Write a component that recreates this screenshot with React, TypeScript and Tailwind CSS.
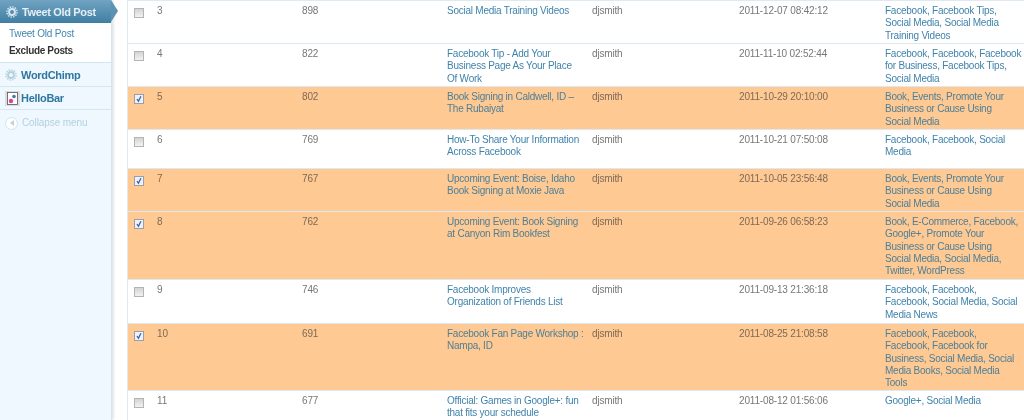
import React from "react";

type Row = { n: number; c: number; t: string[]; d: string; cats: string[]; on?: boolean; h: string };
const rows: Row[] = [
  { n: 3, c: 898, t: ["Social Media Training Videos"], d: "2011-12-07 08:42:12", cats: ["Facebook, Facebook Tips,", "Social Media, Social Media", "Training Videos"], h: "h-[43px]" },
  { n: 4, c: 822, t: ["Facebook Tip - Add Your", "Business Page As Your Place", "Of Work"], d: "2011-11-10 02:52:44", cats: ["Facebook, Facebook, Facebook", "for Business, Facebook Tips,", "Social Media"], h: "h-[43px]" },
  { n: 5, c: 802, t: ["Book Signing in Caldwell, ID –", "The Rubaiyat"], d: "2011-10-29 20:10:00", cats: ["Book, Events, Promote Your", "Business or Cause Using", "Social Media"], on: true, h: "h-[43px]" },
  { n: 6, c: 769, t: ["How-To Share Your Information", "Across Facebook"], d: "2011-10-21 07:50:08", cats: ["Facebook, Facebook, Social", "Media"], h: "h-[39px]" },
  { n: 7, c: 767, t: ["Upcoming Event: Boise, Idaho", "Book Signing at Moxie Java"], d: "2011-10-05 23:56:48", cats: ["Book, Events, Promote Your", "Business or Cause Using", "Social Media"], on: true, h: "h-[43px]" },
  { n: 8, c: 762, t: ["Upcoming Event: Book Signing", "at Canyon Rim Bookfest"], d: "2011-09-26 06:58:23", cats: ["Book, E-Commerce, Facebook,", "Google+, Promote Your", "Business or Cause Using", "Social Media, Social Media,", "Twitter, WordPress"], on: true, h: "h-[68px]" },
  { n: 9, c: 746, t: ["Facebook Improves", "Organization of Friends List"], d: "2011-09-13 21:36:18", cats: ["Facebook, Facebook,", "Facebook, Social Media, Social", "Media News"], h: "h-[44px]" },
  { n: 10, c: 691, t: ["Facebook Fan Page Workshop :", "Nampa, ID"], d: "2011-08-25 21:08:58", cats: ["Facebook, Facebook,", "Facebook, Facebook for", "Business, Social Media, Social", "Media Books, Social Media", "Tools"], on: true, h: "h-[67px]" },
  { n: 11, c: 677, t: ["Official: Games in Google+: fun", "that fits your schedule"], d: "2011-08-12 01:56:06", cats: ["Google+, Social Media"], h: "h-[40px]" },
];

function Box({ on }: { on?: boolean }) {
  return (
    <div className={`mt-[3px] w-[10px] h-[10px] border flex items-center justify-center ${on ? "border-[#9aa0aa] bg-[#eef2f8]" : "border-[#b4b4b4] bg-gradient-to-b from-[#d4d4d4] to-[#f2f2f2]"}`}>
      {on && (
        <svg viewBox="0 0 10 10" className="w-[8px] h-[8px] shrink-0">
          <path d="M2.5 5 L4.3 7.8 L7.4 1.5" fill="none" stroke="#3a5fa8" strokeWidth="1.6" />
        </svg>
      )}
    </div>
  );
}

function Gear({ color, hole }: { color: string; hole: string }) {
  return (
    <svg viewBox="0 0 16 16" className="w-[12px] h-[12px] shrink-0">
      <circle cx="8" cy="8" r="5.2" fill={color} />
      <circle cx="8" cy="8" r="6.8" fill="none" stroke={color} strokeWidth="1.8" strokeDasharray="2 1.5" />
      <circle cx="8" cy="8" r="2.6" fill={hole} />
    </svg>
  );
}

function Lines({ l, cls }: { l: string[]; cls?: string }) {
  return (
    <div className={cls}>
      {l.map((x) => (
        <div key={x} className="whitespace-nowrap">{x}</div>
      ))}
    </div>
  );
}

export default function App() {
  return (
    <div className="w-[1024px] h-[420px] overflow-hidden flex bg-white text-[10px] tracking-[-0.17px] leading-[12.33px] blur-[0.3px] font-['Liberation_Sans',Arial,sans-serif]">
      {/* sidebar */}
      <div className="w-[112px] shrink-0 relative bg-[#eff8ff] border-r border-[#d8e4ec] shadow-[1px_0_3px_rgba(120,150,170,0.35)] z-10">
        <div className="relative h-[23px] bg-gradient-to-b from-[#70a3c1] to-[#3f7fa3] flex items-center pl-[6px] gap-[4px] text-[11px] tracking-[-0.35px] font-bold">
          <Gear color="#d7e8f2" hole="#4f8aac" />
          <span className="text-[#e4eff6] pt-[1px]">Tweet Old Post</span>
          <div className="absolute left-full top-0 w-0 h-0 border-y-[11.5px] border-y-transparent border-l-[7px] border-l-[#5a93b4]" />
        </div>
        <div className="bg-white h-[40px] pt-[2px] pl-[9px] border-b border-[#d3e6f2] text-[10px]">
          <div className="text-[#3f87ad] h-[17px] leading-[17px] tracking-[-0.2px]">Tweet Old Post</div>
          <div className="text-[#333] font-bold h-[17px] leading-[17px] tracking-[-0.35px]">Exclude Posts</div>
        </div>
        <div className="h-[24px] flex items-center pl-[5px] gap-[4px] border-b border-[#d3e6f2] text-[#2f76a0] font-bold text-[11px] tracking-[-0.3px]">
          <Gear color="#b6cfdf" hole="#eff8ff" />
          <span className="pt-[2px]">WordChimp</span>
        </div>
        <div className="h-[23px] flex items-center pl-[5px] gap-[1px] border-b border-[#d3e6f2] text-[#2f76a0] font-bold text-[11px] tracking-[-0.3px]">
          <svg viewBox="0 0 15 15" className="w-[15px] h-[15px] shrink-0">
            <rect x="0" y="0" width="15" height="15" fill="#ddd" />
            <rect x="2.5" y="1.5" width="10" height="12" fill="#fff" stroke="#555" strokeWidth="0.8" />
            <circle cx="9" cy="5.5" r="1.8" fill="#4a78a8" />
            <circle cx="6" cy="10" r="2.2" fill="#e0409a" />
          </svg>
          <span>HelloBar</span>
        </div>
        <div className="h-[26px] flex items-center pl-[5px] gap-[4px] text-[#b4d0e0] text-[10px] tracking-[-0.1px]">
          <div className="w-[13px] h-[13px] rounded-full border border-[#d3e4ee] bg-white flex items-center justify-center">
            <div className="w-0 h-0 border-y-[3px] border-y-transparent border-r-[4px] border-r-[#bcd2e0]" />
          </div>
          <span>Collapse menu</span>
        </div>
      </div>
      <div className="w-[15px] shrink-0" />
      {/* table */}
      <div className="flex-1 min-w-0 border-t border-l border-[#dfe9f1] text-[#777]">
        {rows.map((r) => (
          <div
            key={r.n}
            className={`${r.h} flex border-b border-[#dde8f0] pt-[4px] ${r.on ? "bg-[#fec993] text-[#7f6a55]" : ""}`}
          >
            <div className="w-[29px] pl-[6px] shrink-0"><Box on={r.on} /></div>
            <div className="w-[145px] shrink-0">{r.n}</div>
            <div className="w-[145px] shrink-0">{r.c}</div>
            <Lines l={r.t} cls={`w-[145px] shrink-0 tracking-[-0.24px] ${r.on ? "text-[#4d7f98]" : "text-[#3f83ab]"}`} />
            <div className="w-[147px] shrink-0">djsmith</div>
            <div className="w-[146px] shrink-0">{r.d}</div>
            <Lines l={r.cats} cls={`flex-1 tracking-[-0.24px] ${r.on ? "text-[#4d7f98]" : "text-[#3f83ab]"}`} />
          </div>
        ))}
      </div>
    </div>
  );
}
